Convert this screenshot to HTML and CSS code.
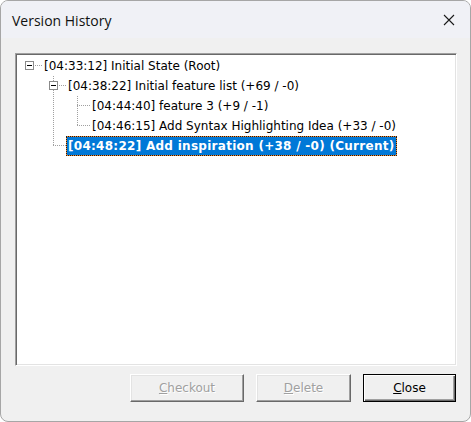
FILE: index.html
```html
<!DOCTYPE html>
<html>
<head>
<meta charset="utf-8">
<title>Version History</title>
<link rel="stylesheet" href="styles.css">
</head>
<body>
<div class="window">
  <div class="titlebar">
    <span class="title">Version History</span>
    <svg class="close-x" width="12" height="12" viewBox="0 0 12 12"><path d="M1 1 L11 11 M11 1 L1 11" stroke="#1a1a1a" stroke-width="1.1" fill="none"/></svg>
  </div>
  <div class="content">
    <div class="tree">
      <div class="row">
        <span class="cell h"><span class="exp"></span></span>
        <span class="label">[04:33:12] Initial State (Root)</span>
      </div>
      <div class="row">
        <span class="cell"></span>
        <span class="cell v h"><span class="exp"></span></span>
        <span class="label">[04:38:22] Initial feature list (+69 / -0)</span>
      </div>
      <div class="row">
        <span class="cell"></span>
        <span class="cell v"></span>
        <span class="cell v h"></span>
        <span class="label">[04:44:40] feature 3 (+9 / -1)</span>
      </div>
      <div class="row">
        <span class="cell"></span>
        <span class="cell v"></span>
        <span class="cell vt h"></span>
        <span class="label">[04:46:15] Add Syntax Highlighting Idea (+33 / -0)</span>
      </div>
      <div class="row">
        <span class="cell"></span>
        <span class="cell vt h"></span>
        <span class="label sel">[04:48:22] Add inspiration (+38 / -0) (Current)</span>
      </div>
    </div>
    <div class="buttons">
      <button class="btn btn-checkout" disabled><u>C</u>heckout</button>
      <button class="btn btn-delete" disabled><u>D</u>elete</button>
      <button class="btn btn-close default"><u>C</u>lose</button>
    </div>
  </div>
</div>
</body>
</html>
```
FILE: styles.css
```css
html, body {
  margin: 0;
  padding: 0;
  background: #ffffff;
}

.window {
  width: 471px;
  height: 422px;
  box-sizing: border-box;
  border: 1px solid #a6a6a6;
  border-radius: 8px;
  overflow: hidden;
  display: flex;
  flex-direction: column;
  background: #f0f0f0;
}

.titlebar {
  height: 37px;
  flex: none;
  display: flex;
  align-items: center;
  justify-content: space-between;
  padding: 0 15px 0 11px;
  background: #f0f1f6;
}

.title {
  font-family: "Open Sans", "Noto Sans", sans-serif;
  font-size: 14px;
  color: #111;
  padding-top: 1px;
}

.close-x {
  display: block;
  margin-top: 1px;
}

.content {
  flex: 1;
  display: flex;
  flex-direction: column;
  padding: 15px 13px 0 14px;
}

.tree {
  height: 313px;
  box-sizing: border-box;
  background: #ffffff;
  border-style: solid;
  border-width: 1px;
  border-color: #a0a0a0 #ffffff #ffffff #a0a0a0;
  box-shadow: inset 1px 1px 0 #696969, inset -1px -1px 0 #e3e3e3;
  padding: 2px 2px 2px 2px;
  font-family: "DejaVu Sans", sans-serif;
  font-size: 12px;
  color: #000;
}

.row {
  display: flex;
  align-items: center;
  height: 20px;
}

.cell {
  flex: none;
  width: 24px;
  height: 20px;
  display: flex;
  align-items: center;
  padding-left: 7px;
  box-sizing: border-box;
  background-repeat: no-repeat;
}

.cell.h {
  background-image: repeating-linear-gradient(to right, #a0a0a0 0 1px, transparent 1px 2px);
  background-position: 11px 9px;
  background-size: 13px 1px;
}

.cell.v {
  background-image: repeating-linear-gradient(to bottom, #a0a0a0 0 1px, transparent 1px 2px);
  background-position: 11px 0;
  background-size: 1px 20px;
}

.cell.vt {
  background-image: repeating-linear-gradient(to bottom, #a0a0a0 0 1px, transparent 1px 2px);
  background-position: 11px 0;
  background-size: 1px 10px;
}

.cell.v.h {
  background-image:
    repeating-linear-gradient(to bottom, #a0a0a0 0 1px, transparent 1px 2px),
    repeating-linear-gradient(to right, #a0a0a0 0 1px, transparent 1px 2px);
  background-position: 11px 0, 11px 9px;
  background-size: 1px 20px, 13px 1px;
  background-repeat: no-repeat;
}

.cell.vt.h {
  background-image:
    repeating-linear-gradient(to bottom, #a0a0a0 0 1px, transparent 1px 2px),
    repeating-linear-gradient(to right, #a0a0a0 0 1px, transparent 1px 2px);
  background-position: 11px 0, 11px 9px;
  background-size: 1px 10px, 13px 1px;
  background-repeat: no-repeat;
}

.exp {
  width: 9px;
  height: 9px;
  box-sizing: border-box;
  border: 1px solid #8a8a8a;
  background: linear-gradient(#000, #000) no-repeat center / 5px 1px, #ffffff;
  margin-top: -1px;
}

.label {
  flex: none;
  height: 20px;
  line-height: 18px;
  box-sizing: border-box;
  border: 1px solid transparent;
  padding: 0 1px 0 1px;
  white-space: nowrap;
}

.label.sel {
  font-weight: bold;
  letter-spacing: 0.28px;
  color: #ffffff;
  border: 1px dotted #1c1c1c;
  background:
    linear-gradient(#0078d7, #0078d7) padding-box,
    linear-gradient(#f58a2e, #f58a2e) border-box;
}

.buttons {
  display: flex;
  justify-content: flex-end;
  gap: 12px;
  margin-top: 8px;
  padding-right: 1px;
}

.btn {
  height: 28px;
  box-sizing: border-box;
  font-family: "DejaVu Sans", sans-serif;
  font-size: 12px;
  color: #000;
  background: #f0f0f0;
  border-style: solid;
  border-width: 1px;
  border-color: #ffffff #696969 #696969 #ffffff;
  box-shadow: inset -1px -1px 0 #a0a0a0, inset 1px 1px 0 #e3e3e3;
  padding: 0;
  margin: 0;
}

.btn-checkout { width: 114px; }
.btn-delete { width: 95px; }
.btn-close { width: 93px; }

.btn:disabled {
  color: #a0a0a0;
  text-shadow: 1px 1px 0 #ffffff;
}

.btn.default {
  border-color: #000000;
  box-shadow: inset 1px 1px 0 #ffffff, inset -1px -1px 0 #696969, inset -2px -2px 0 #a0a0a0;
}
```
